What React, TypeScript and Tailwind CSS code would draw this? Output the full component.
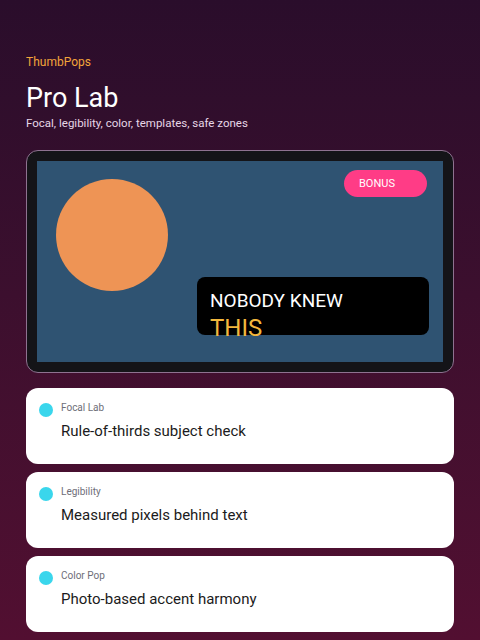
import React from 'react';

const features = [
  { label: 'Focal Lab', title: 'Rule-of-thirds subject check' },
  { label: 'Legibility', title: 'Measured pixels behind text' },
  { label: 'Color Pop', title: 'Photo-based accent harmony' },
];

function FeatureCard({ label, title }: { label: string; title: string }) {
  return (
    <div className="h-[76px] bg-white rounded-[12px] flex items-start gap-[8px] pl-[13px] pt-[13px]">
      <div className="w-[14px] h-[14px] rounded-full bg-[#3ad6ec] mt-[2px] shrink-0" />
      <div className="flex flex-col">
        <span className="text-[10px] leading-[14px] text-[#6e6e78]">{label}</span>
        <span className="mt-[6px] text-[15px] leading-[20px] text-[#1b1b20]">{title}</span>
      </div>
    </div>
  );
}

export default function App() {
  return (
    <div
      className="min-h-[640px] w-full bg-gradient-to-b from-[#2a0d2b] to-[#520f31] px-[26px] pt-[54px] pb-[8px]"
      style={{ fontFamily: 'Roboto, "Noto Sans", sans-serif' }}
    >
      <div className="text-[12px] leading-[16px] text-[#f2a43a]">ThumbPops</div>
      <h1 className="mt-[11px] text-[27px] leading-[34px] text-white">Pro Lab</h1>
      <p className="mt-[-1px] text-[11.5px] leading-[18px] text-[#e6d6e6]">
        Focal, legibility, color, templates, safe zones
      </p>

      <div className="mt-[18px] rounded-[12px] border border-[#8e7290] bg-[#141418] p-[10px]">
        <div className="relative h-[201px] bg-[#2f5372]">
          <div className="absolute left-[19px] top-[18px] w-[112px] h-[112px] rounded-full bg-[#ee9455]" />
          <div className="absolute right-[16px] top-[9px] w-[83px] h-[27px] rounded-full bg-[#ff3c86] flex items-center pl-[15px]">
            <span className="text-[11px] leading-[14px] text-white">BONUS</span>
          </div>
          <div className="absolute right-[14px] bottom-[27px] w-[232px] h-[58px] rounded-[8px] bg-black pl-[13px] pt-[13px]">
            <div className="text-[19px] leading-[22px] text-white">NOBODY KNEW</div>
            <div className="mt-[2px] text-[24px] leading-[28px] text-[#f3b83d]">THIS</div>
          </div>
        </div>
      </div>

      <div className="mt-[15px] flex flex-col gap-[8px]">
        {features.map((f) => (
          <FeatureCard key={f.label} label={f.label} title={f.title} />
        ))}
      </div>
    </div>
  );
}
